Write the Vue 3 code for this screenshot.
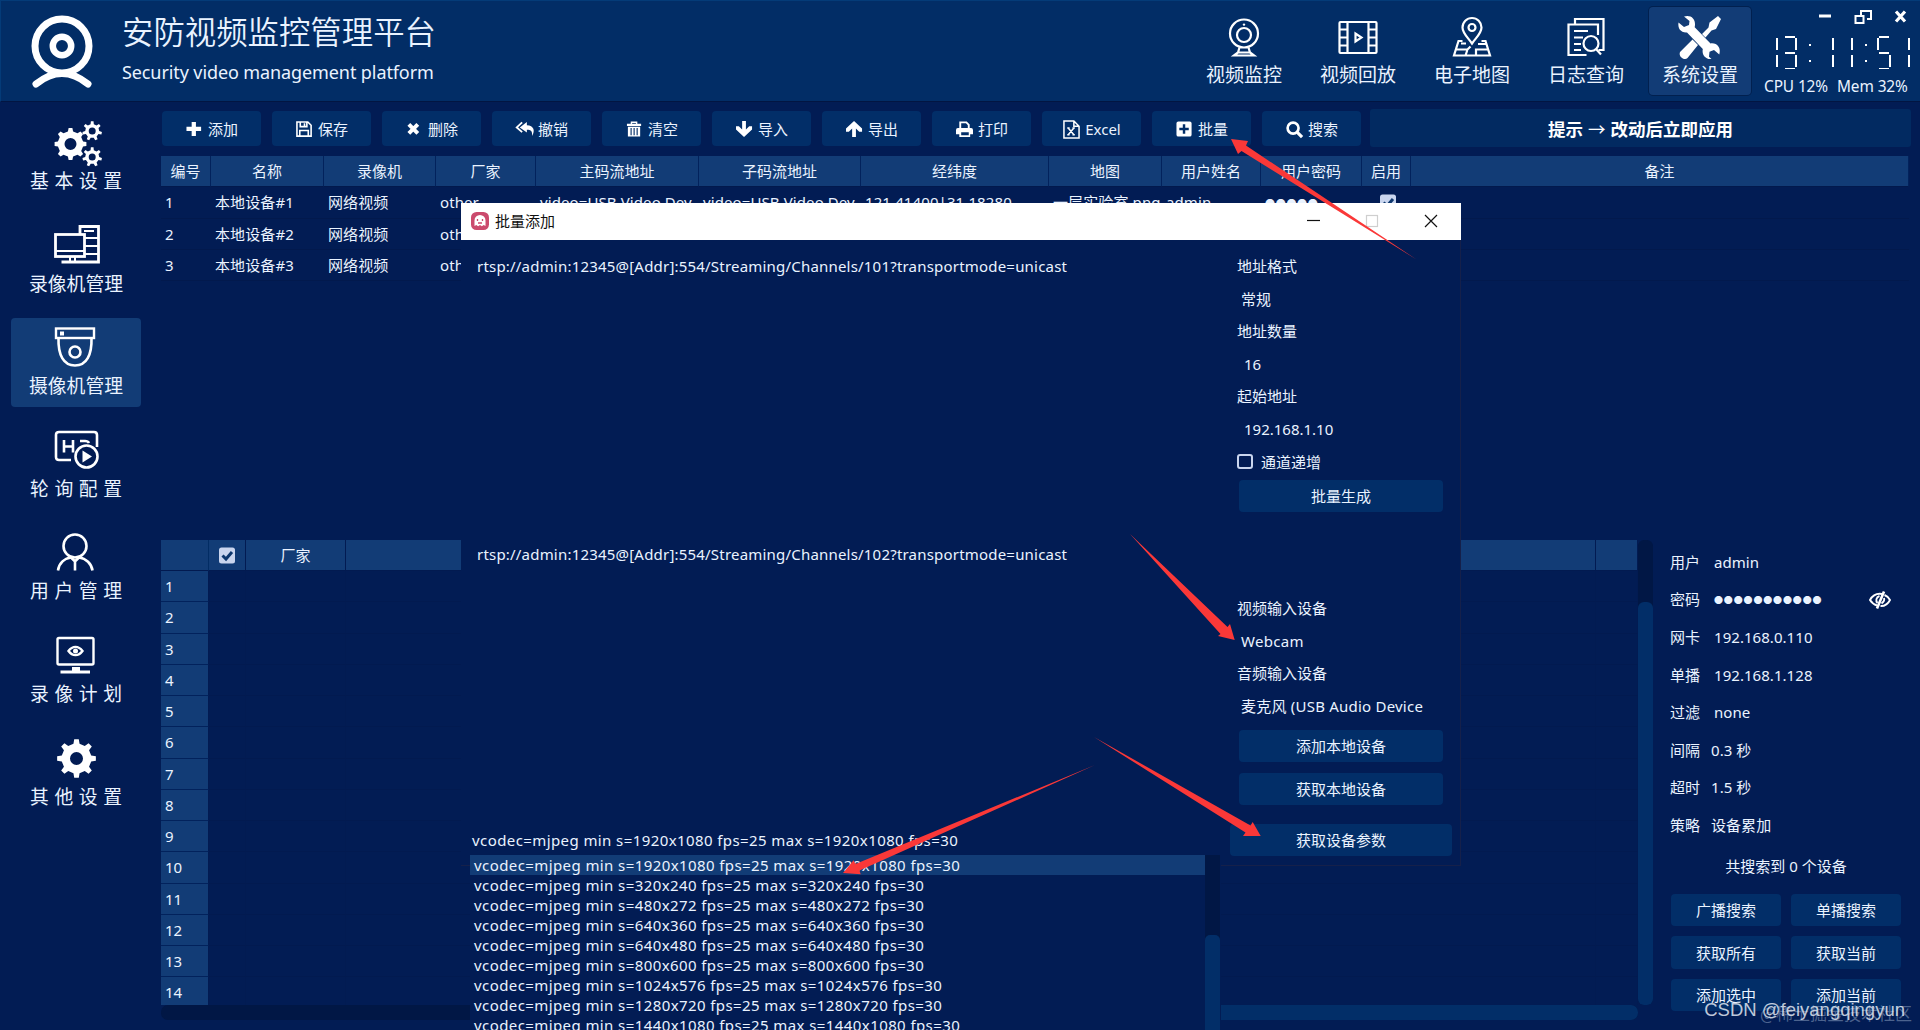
<script setup>
const gear = (cx, cy, ro, ri, hole, n, tw = 0.26) => {
  const pts = []
  for (let i = 0; i < n; i++) {
    const a = (i / n) * Math.PI * 2 - Math.PI / 2
    const step = Math.PI / n
    const p = (r, t) => `${(cx + r * Math.cos(t)).toFixed(2)} ${(cy + r * Math.sin(t)).toFixed(2)}`
    pts.push(p(ri, a - step * (tw + 0.22)), p(ro, a - step * tw), p(ro, a + step * tw), p(ri, a + step * (tw + 0.22)))
  }
  return `<path fill="currentColor" stroke="none" fill-rule="evenodd" d="M${pts.join('L')}Z M${cx - hole} ${cy}a${hole} ${hole} 0 1 0 ${hole * 2} 0a${hole} ${hole} 0 1 0 ${-hole * 2} 0Z"/>`
}

const F = 'fill="currentColor" stroke="none"'
const icons = {
  webcam: '<circle cx="22" cy="18.5" r="14"/><circle cx="22" cy="20" r="7"/><circle cx="22" cy="9.6" r="1.2" fill="currentColor" stroke="none"/><path d="M17.5 32.5l-1.5 5-4 3h20l-4-3-1.500-5M16 37.500h12"/>',
  film: '<rect x="3.500" y="7" width="37" height="31" rx="1"/><path d="M11.500 7v31M32.500 7v31M3.500 14.500h8M3.500 22.500h8M3.500 30.500h8M32.500 14.500h8M32.500 22.500h8M32.500 30.500h8M19.500 18.500v8l6-4z"/>',
  map: '<path d="M22 28.500c-5-7-9.500-10.500-9.500-16a9.500 9.500 0 0 1 19 0c0 5.500-4.500 9-9.500 16z"/><circle cx="22" cy="12.500" r="3.500"/><path d="M12.500 26h-4l-4.500 14.500h36l-4.500-14.500h-4M5.500 34.500h12l3-3M17.500 34.500l-2 6M26 40.500v-6h12M28 29h8M11 28.500h5"/>',
  log: '<path d="M11 9.500v-5.500h28.500v31h-5"/><path d="M34 20v-10.500h-29.500v30.500h18"/><path d="M10 16h14M10 22.500h9M10 29h7M10 35h7"/><circle cx="27" cy="28.500" r="7.500"/><path d="M32 34l5 5.500"/>',
  tools: `<path ${F} d="M7 1.500c6-2 11.500 1.500 11 8.500l-.3 2.200L33.500 28.500c6-1 11 4 8.800 11l-5.300-4.500-4.500 1.800-.5 5 2.500 2.200c-5.500.8-10-4-8.700-10L10 17.500C4 18 .5 13.500 1.500 7.500l5.500 4.500 5-2 .5-4z"/><path ${F} d="M41 1l3 3-5 10-4.500 1.500-6 7-3.500-3.500 6.500-6.500 1-5zM15.500 24.500l5.500 5.500-10.500 13c-2.500 3-9.500-1-7.500-6z"/>`,
  gears: gear(16.500, 22, 16, 12.8, 6, 8, 0.3) + gear(38.200, 9, 9.8, 7, 3.500, 7, 0.3) + gear(38.200, 35, 9.8, 7, 3.500, 7, 0.3),
  pc: '<path stroke-width="2.800" d="M26 9V1.500h18.500v35.500h-37"/><rect x="1.500" y="9.500" width="29" height="22" stroke-width="2.800"/><path stroke-width="2" d="M2 26h28M30 13h14M30 21h14M30 29h14M30 6h10M16 31v5M21 31v5"/>',
  dome: '<rect x="2" y="1.500" width="38" height="9.500" stroke-width="2.400"/><path stroke-width="2.600" d="M4.500 11c-.5 17 5 27.500 16.500 27.500S38 28 37.500 11"/><circle cx="21" cy="25" r="5.500" stroke-width="2.600"/><rect x="6" y="4.500" width="4" height="4" fill="currentColor" stroke="none"/>',
  poll: '<path stroke-width="2.600" d="M17 30H5q-3 0-3-3V5q0-3 3-3h35q3 0 3 3v12"/><path stroke-width="2.600" d="M10 10v12.500M19 10v12.500M10 16.500h9M26 11h5q3 0 4 2"/><circle cx="32.500" cy="26.500" r="11" stroke-width="2.600"/><path fill="currentColor" stroke="none" d="M28.500 20.500v12l9.500-6z"/>',
  user: '<circle cx="21" cy="14" r="11.500" stroke-width="2.600"/><path stroke-width="2.600" d="M4 38.500c1-7 6-12 13-13l4 4 4-4c7 1 12.500 6 13.500 13M21 30v8.500"/>',
  plan: `<rect x="3.500" y="3" width="36" height="26.500" rx="1.500" stroke-width="2.400"/><path ${F} d="M18 32h8v3.500h10v3H6.500v-3H18z"/><path stroke-width="2.400" d="M14.500 16c4-5.500 10-5.500 14 0c-4 5.500-10 5.500-14 0z"/><circle cx="21.500" cy="16" r="2.500" ${F}/>`,
  gear: gear(22.5, 20.5, 19.5, 15, 6.5, 8, 0.3),
  plus: `<path ${F} d="M6 1h4.500v5H16v4.500h-5.500V16H6v-5.500H.5V6H6z"/>`,
  save: '<path stroke-width="1.700" d="M1 1h11.500L16 4.500V16H1zM4.500 1v5h7V1M4 16v-6h9v6M9 2.500v2.500"/>',
  del: '<path stroke-width="4.200" d="M3 3.500l9.500 9.500M12.500 3.500L3 13"/>',
  undo: `<path ${F} d="M12 1L4.500 6.800l7.500 5.500V9.200c4.500 0 6 1.500 5.500 6.800 3.500-6 2-11-5.500-11.500z" transform="translate(-.5 0)"/><path stroke-width="2" d="M6.500 1.500L.8 6.800l5.700 5"/>`,
  trash: `<path ${F} fill-rule="evenodd" d="M1 3h4V.5h7V3h4v2.200H1zM6.500 2v1h4V2zM2 6h13v10.500H2zM4.800 7.500V15H6V7.500zM8 7.500V15h1.200V7.500zM11.200 7.500V15h1.200V7.500z"/>`,
  down: `<path ${F} d="M6.500 0h4v9L14 5.500h3V9l-8.500 8L0 9V5.500h3L6.500 9z"/>`,
  up: `<path ${F} d="M6.500 17h4V8l3.500 3.500h3V8L8.500 0 0 8v3.500h3L6.500 8z"/>`,
  print: `<path stroke-width="2" d="M4.500 9V1.500h6.500l2.500 2.500v5"/><path ${F} fill-rule="evenodd" d="M2 7.500h14q2 0 2 2V14h-3v3H3.500v-3H0V9.500q0-2 2-2zM5.500 12v3h8v-3z"/>`,
  excel: '<path stroke-width="1.600" d="M1 0h10.500L17 5.500V18H1zM11.500 0v5.500H17M5.500 7.500l6 7M11.500 7.500l-6 7M4.500 7.500h2.500M10 7.500h2.500M4.500 14.500h2.500M10 14.500h2.500"/>',
  batch: `<path ${F} fill-rule="evenodd" d="M2.500.5h12q2 0 2 2v12q0 2-2 2h-12q-2 0-2-2v-12q0-2 2-2zM7.200 3.500v3.700H3.500v2.600h3.700v3.700h2.600V9.800h3.700V7.200H9.800V3.500z"/>`,
  search: '<circle cx="7.500" cy="7.500" r="5.800" stroke-width="2.800"/><path stroke-width="3.400" d="M12 12l5 5"/>',
}

const nav = [
  ['webcam', '视频监控'], ['film', '视频回放'], ['map', '电子地图'], ['log', '日志查询'], ['tools', '系统设置'],
]
const side = [
  ['gears', '基本设置'], ['pc', '录像机管理'], ['dome', '摄像机管理'], ['poll', '轮询配置'],
  ['user', '用户管理'], ['plan', '录像计划'], ['gear', '其他设置'],
]
const tools = [
  ['plus', '添加'], ['save', '保存'], ['del', '删除'], ['undo', '撤销'], ['trash', '清空'], ['down', '导入'],
  ['up', '导出'], ['print', '打印'], ['excel', 'Excel'], ['batch', '批量'], ['search', '搜索'],
]
const heads = ['编号', '名称', '录像机', '厂家', '主码流地址', '子码流地址', '经纬度', '地图', '用户姓名', '用户密码', '启用', '备注']
const rows = [1, 2, 3].map((n) => [
  n, `本地设备#${n}`, '网络视频', 'other', 'video=USB Video Dev', 'video=USB Video Dev', '121.41400|31.18280',
  '一层实验室.png', 'admin', '●●●●●', '', '',
].map((c, i) => (n > 1 && i > 3 ? '' : c)))
const form = [
  ['用户', 'admin'], ['密码', '●●●●●●●●●●●'], ['网卡', '192.168.0.110'], ['单播', '192.168.1.128'],
  ['过滤', 'none'], ['间隔', '0.3 秒'], ['超时', '1.5 秒'], ['策略', '设备累加'],
]
const actions = ['广播搜索', '单播搜索', '获取所有', '获取当前', '添加选中', '添加当前']
const sizes = ['1920x1080', '320x240', '480x272', '640x360', '640x480', '800x600', '1024x576', '1280x720', '1440x1080']
const codec = (s) => `vcodec=mjpeg min s=${s} fps=25 max s=${s} fps=30`

// Lit segments of the LCD clock, a..g as on a seven-segment display
const lit = { 1: 'bc', 3: 'abcdg', 5: 'acdfg' }
const time = '13:11:51'
</script>

<template>
  <div class="app">
    <header class="top">
      <svg class="logo" viewBox="0 0 64 74" fill="none" stroke="#fff">
        <circle cx="32" cy="31" r="27" stroke-width="7" />
        <circle cx="32" cy="31" r="9.200" stroke-width="6.500" />
        <path d="M6 69q26-21 52 0" stroke-width="7" stroke-linecap="round" />
      </svg>
      <div class="brand">
        <h1>安防视频监控管理平台</h1>
        <p>Security video management platform</p>
      </div>
      <nav class="nav">
        <div v-for="(n, i) in nav" :key="n[0]" class="nav-item" :class="{ on: i === 4 }">
          <svg viewBox="0 0 44 44" class="ico" v-html="icons[n[0]]" />
          <span>{{ n[1] }}</span>
        </div>
      </nav>
      <div class="status">
        <svg class="wins" viewBox="0 0 90 16" fill="none" stroke="#fff">
          <path d="M0 7h12" stroke-width="3" />
          <path d="M42 8V2h10v8h-4" stroke-width="2" />
          <rect x="36.500" y="7" width="8" height="7" stroke-width="2" />
          <path d="M77 2.500l9 10M86 2.500l-9 10" stroke-width="3.200" />
        </svg>
        <div class="clock" :aria-label="time">
          <span v-for="(c, i) in time" :key="i" class="cell" :class="{ colon: c === ':' }">
            <i v-for="s in lit[c]" :key="s" :class="'seg ' + s" />
          </span>
        </div>
        <div class="usage"><span>CPU 12%</span><span>Mem 32%</span></div>
      </div>
    </header>

    <div class="main">
      <aside class="side">
        <div v-for="(s, i) in side" :key="s[0]" class="side-item" :class="{ on: i === 2, wide: s[1].length === 4 }">
          <svg viewBox="0 0 46 44" class="ico" v-html="icons[s[0]]" />
          <span>{{ s[1] }}</span>
        </div>
      </aside>

      <section class="content">
        <div class="toolbar">
          <button v-for="t in tools" :key="t[0]" class="btn">
            <svg viewBox="0 0 18 18" class="ico" v-html="icons[t[0]]" /><span>{{ t[1] }}</span>
          </button>
          <div class="tip"><span>提示</span><span class="to">→</span><span>改动后立即应用</span></div>
        </div>

        <div class="grid">
          <div class="tr th"><span v-for="h in heads" :key="h">{{ h }}</span></div>
          <div v-for="(r, ri) in rows" :key="r[0]" class="tr">
            <span v-for="(c, i) in r" :key="i" :class="{ dots: i === 9, chk: i === 10 }">
              <svg v-if="i === 10 && ri === 0" class="check" viewBox="0 0 16 16"><rect width="16" height="16" rx="2.500" fill="#c9d5ee" /><path d="M3.500 8l3.500 3.500 6-7" fill="none" stroke="#0d376d" stroke-width="3" /></svg>
              <template v-else>{{ c }}</template>
            </span>
          </div>
        </div>

        <div class="lower">
          <div class="found">
            <div class="fr fh">
              <span /><span><svg class="check" viewBox="0 0 16 16"><rect width="16" height="16" rx="2.500" fill="#c9d5ee" /><path d="M3.500 8l3.500 3.500 6-7" fill="none" stroke="#0d376d" stroke-width="3" /></svg></span><span>厂家</span><span /><span />
            </div>
            <div class="frows">
              <div v-for="n in 14" :key="n" class="fr"><span class="num">{{ n }}</span><span /><span /><span /><span /></div>
            </div>
            <div class="hbar"><i /></div>
          </div>
          <div class="vbar"><i /></div>
          <div class="panel">
            <div v-for="(f, i) in form" :key="f[0]" class="frm" :class="{ near: i > 4 }">
              <label>{{ f[0] }}</label><span :class="{ pw: i === 1 }">{{ f[1] }}</span>
              <svg v-if="i === 1" class="eye" viewBox="0 0 22 18" fill="none" stroke="#fff" stroke-width="1.900">
                <path d="M8 14.500C5 13.500 2.500 11.500 1 9c2.500-4.500 7-6.800 12-6M15.500 4c2.500 1 4.500 3 5.500 5-2 4-5.500 6.200-9.500 6" />
                <path d="M15 .5L8 17.500" stroke-width="2.600" />
                <path d="M8.500 12c-2-2-1.500-6 2-7M15 7q1 3-2.500 5.500" />
              </svg>
            </div>
            <p class="count">共搜索到 0 个设备</p>
            <div class="acts"><button v-for="a in actions" :key="a" class="btn">{{ a }}</button></div>
          </div>
        </div>
      </section>
    </div>

    <div class="dialog">
      <div class="title">
        <svg class="face" viewBox="0 0 18 18"><rect width="18" height="18" rx="5.500" fill="#cb4a6d" /><path d="M3.500 14V8.500a5.500 5.500 0 0 1 11 0V14l-1.800-1-1.800 1.200L9 13l-1.900 1.200L5.300 13z" fill="#fff" /><path d="M6.500 7v2M11.500 7v2M7 11h4" stroke="#cb4a6d" stroke-width="1.300" /></svg>
        <span>批量添加</span>
        <svg class="ctl" viewBox="0 0 132 14" fill="none" stroke="#111" stroke-width="1.200">
          <path d="M0 6.500h13" /><path d="M118 1l12 12M130 1l-12 12" /><rect x="59.500" y="1.500" width="11" height="11" stroke="#cfcfcf" />
        </svg>
      </div>
      <div class="dbody">
        <div class="left">
          <div class="area">rtsp://admin:12345@[Addr]:554/Streaming/Channels/101?transportmode=unicast</div>
          <div class="area">rtsp://admin:12345@[Addr]:554/Streaming/Channels/102?transportmode=unicast</div>
          <div class="combo">{{ codec(sizes[0]) }}</div>
        </div>
        <div class="right">
          <p>地址格式</p>
          <p class="v">常规</p>
          <p>地址数量</p>
          <p class="v n">16</p>
          <p>起始地址</p>
          <p class="v n">192.168.1.10</p>
          <p class="inc"><i class="box" />通道递增</p>
          <button class="btn gen">批量生成</button>
          <p>视频输入设备</p>
          <p class="v dev">Webcam</p>
          <p>音频输入设备</p>
          <p class="v clip"><span>麦克风 (USB Audio Device)</span></p>
          <button class="btn add">添加本地设备</button>
          <button class="btn get">获取本地设备</button>
          <button class="btn param">获取设备参数</button>
        </div>
      </div>
    </div>

    <div class="popup">
      <div class="items"><div v-for="(s, i) in sizes" :key="s" :class="{ sel: i === 0 }">{{ codec(s) }}</div></div>
      <div class="pbar"><i /></div>
    </div>

    <svg class="arrows" viewBox="0 0 1920 1030" fill="#fa3838">
      <polygon points="1231,139 1248,141 1246,145.500 1416.500,259.500 1241.500,151 1238,154" />
      <polygon points="1130,534 1227.500,627 1230,624 1234.700,640 1218,636 1220.500,634" />
      <polygon points="1094,737 1250.500,825.500 1252.700,822 1260.700,836 1243,836 1245.500,832.500" />
      <polygon points="1095,765 855.500,864 853.600,860.300 843,873 860.700,874.300 859.500,870.500" />
    </svg>
    <div class="mark faint">@稀土掘金技术社区</div>
    <div class="mark">CSDN @feiyangqingyun</div>
  </div>
</template>

<style>
body { margin: 0; background: #021c54; }
</style>

<style scoped>
* { box-sizing: border-box; }
.app { position: relative; display: flex; flex-direction: column; width: 1920px; height: 1030px; overflow: hidden; background: #021c54; color: #eaf3ff; font: 400 15px/20px 'Noto Sans', 'Noto Sans CJK SC', sans-serif; }
h1, p { margin: 0; font-weight: inherit; }
.ico { fill: none; stroke: currentColor; stroke-width: 2.2; color: #fff; flex: none; overflow: visible; }
.btn { display: flex; align-items: center; justify-content: center; border: 0; padding: 0; border-radius: 4px; background: #022e68; color: inherit; font: inherit; white-space: nowrap; }

.top { display: flex; height: 102px; flex: none; background: #022d66; border-top: 1px solid #043b78; border-left: 1px solid #043b78; border-bottom: 1px solid #021542; }
.logo { width: 64px; height: 74px; margin: 14px 0 0 29px; }
.brand { margin-left: 28px; width: 361px; white-space: nowrap; }
.brand h1 { margin-top: 10px; font-size: 31.4px; line-height: 42px; font-weight: 350; }
.brand p { margin-top: 6px; font-size: 18px; line-height: 26px; letter-spacing: -0.1px; }
.nav { display: flex; gap: 12px; margin: 6px 0 0 710px; }
.nav-item { width: 102px; height: 88px; display: flex; flex-direction: column; align-items: center; border-radius: 4px; font-size: 19px; }
.nav-item .ico { width: 44px; height: 44px; margin-top: 8px; }
.nav-item span { margin-top: 4px; line-height: 24px; }
.nav-item.on { background: #123c76; box-shadow: 0 0 0 1px #01204f; }
.nav-item.on .ico { margin-left: -3px; }
.status { display: flex; flex-direction: column; margin-left: 13px; width: 150px; }
.wins { width: 90px; height: 16px; margin: 8px 0 0 55px; }
.clock { display: flex; gap: 4.8px; margin: 11px 0 0 0; height: 34px; }
.cell { position: relative; width: 14px; height: 33px; flex: none; }
.seg { position: absolute; background: #fff; }
.seg.a, .seg.g, .seg.d { left: 2px; right: 2px; height: 1.5px; }
.seg.a { top: 0; } .seg.g { top: 16px; } .seg.d { bottom: 0; }
.seg.b, .seg.c, .seg.f { width: 2px; height: 12px; }
.seg.b { top: 2px; right: 0; } .seg.c { bottom: 2px; right: 0; } .seg.f { top: 2px; left: 0; }
.colon::before, .colon::after { content: ''; position: absolute; left: 7px; width: 2px; height: 2px; background: #fff; }
.colon::before { top: 8px; } .colon::after { top: 24px; }
.usage { display: flex; gap: 9px; margin-top: 7px; font-size: 15.4px; letter-spacing: -0.1px; white-space: nowrap; }

.main { display: flex; flex: 1; min-height: 0; }
.side { width: 161px; padding: 11px 0 0 11px; display: flex; flex-direction: column; gap: 13.6px; flex: none; }
.side-item { width: 130px; height: 89px; display: flex; flex-direction: column; align-items: center; border-radius: 4px; font-size: 18.8px; }
.side-item .ico { width: 46px; height: 44px; margin: 9px 0 0 2px; }
.side-item span { margin-top: 3px; line-height: 24px; }
.side-item.wide span { letter-spacing: 5.6px; margin-right: -5.6px; }
.side-item.on { background: #123c76; }

.content { flex: 1; display: flex; flex-direction: column; min-width: 0; }
.toolbar { display: flex; gap: 11px; padding: 9px 0 0 1px; height: 54px; }
.toolbar .btn { width: 99px; height: 35px; gap: 6px; padding: 1px 0 0 1px; }
.toolbar .ico { width: 17px; height: 17px; }
.toolbar .btn span { margin-left: -1px; }
.tip { width: 541px; height: 38px; margin: -2px 0 0 -2px; padding-top: 2px; display: flex; align-items: center; justify-content: center; gap: 5px; background: #022a61; border-radius: 3px; font-size: 17.5px; font-weight: 700; color: #fff; font-family: 'Noto Sans CJK SC', sans-serif; }
.to { font-weight: 400; }
.grid { height: 384px; width: 1748px; }
.tr { display: grid; grid-template-columns: 50px 113px 112px 100px 163px 162px 188px 113px 99px 101px 49px 498px; height: 31.3px; }
.tr > span { overflow: hidden; white-space: nowrap; line-height: 30.5px; padding-left: 4px; letter-spacing: 0.1px; border-bottom: 1px solid #02194d; }
.th > span { padding: 0; text-align: center; letter-spacing: 0; background: #123c76; border-right: 1px solid #02225c; line-height: 30px; }
.tr > .dots { font-size: 10px; letter-spacing: 0.7px; line-height: 35px; }
.tr > .chk { padding: 7px 0 0 18px; }
.check { width: 16px; height: 17px; display: block; }

.lower { display: flex; flex: 1; }
.found { width: 1477px; }
.fr { display: grid; grid-template-columns: 48px 37px 100px 1250px 42px; height: 31.25px; }
.fr > span { border-bottom: 1px solid #021a50; border-right: 1px solid #021b52; }
.fr > .num { background: #123c76; padding-left: 4px; line-height: 30px; border-bottom: 1px solid #02225c; }
.fh { height: 31px; }
.fh > span { background: #123c76; display: flex; align-items: center; justify-content: center; }
.fh > span:first-child { border-right-color: #022c64; }
.frows { height: 434px; overflow: hidden; }
.hbar { height: 15px; background: #011745; border-radius: 7px; }
.hbar i { display: block; margin-left: 340px; height: 15px; background: #022e68; border-radius: 7px; }
.vbar { width: 15px; height: 465px; background: #011745; padding-top: 62px; border-radius: 6px; }
.vbar i { display: block; height: 403px; background: #022e68; border-radius: 6px; }
.panel { width: 240px; margin-left: 17px; padding-top: 3px; }
.frm { display: flex; align-items: center; height: 37.6px; }
.frm label { width: 44px; }
.frm.near label { width: 41px; }
.frm > span { white-space: nowrap; letter-spacing: 0.05px; }
.frm > .pw { font-size: 9px; letter-spacing: 0.85px; width: 155px; padding-top: 2px; }
.eye { width: 22px; height: 18px; margin-top: 2px; }
.count { text-align: center; margin-top: 12px; padding-right: 8px; }
.acts { display: grid; grid-template-columns: 110px 110px; gap: 10px; margin: 18px 0 0 1px; }
.acts .btn { height: 32.5px; }

.dialog { position: absolute; left: 461px; top: 203px; width: 1000px; height: 663px; background: #021c54; border: solid #15204a; border-width: 0 1px 1px 0; }
.title { display: flex; align-items: center; height: 37px; background: #fff; color: #111; padding: 0 19px 2px 10px; width: 1000px; }
.title span { margin-left: 6px; flex: 1; }
.face { width: 18px; height: 18px; }
.ctl { width: 132px; height: 14px; margin-right: 3px; }
.dbody { display: flex; }
.left { width: 769px; padding-top: 8px; }
.area { height: 288px; padding: 8px 0 0 16px; white-space: nowrap; letter-spacing: 0.2px; }
.combo { padding: 6px 0 0 11px; letter-spacing: 0.41px; }
.right { width: 222px; padding: 10px 0 0 7px; }
.right p { height: 32.6px; line-height: 32px; white-space: nowrap; }
.right .v { padding-left: 4px; }
.right .n { padding-left: 7px; letter-spacing: 0; }
.right .dev { letter-spacing: 0.3px; }
.clip span { display: block; width: 182px; overflow: hidden; letter-spacing: 0.22px; }
.right .inc { display: flex; align-items: center; }
.box { width: 16px; height: 15px; border: 2px solid #c9d5ee; border-radius: 3px; margin-right: 8px; }
.right .btn { width: 204px; height: 32px; margin-left: 2px; }
.right .gen { margin: 2px 0 80px 2px; }
.right .add { margin-top: 7px; }
.right .get { margin-top: 11px; }
.right .param { width: 222px; margin: 19px 0 0 -7px; }

.popup { position: absolute; left: 470px; top: 855px; width: 751px; height: 175px; overflow: hidden; display: flex; background: #021c54; }
.items { width: 735px; letter-spacing: 0.41px; }
.items > div { height: 20px; line-height: 20px; padding-left: 4px; white-space: nowrap; }
.items .sel { background: #123c76; }
.pbar { width: 15px; height: 190px; background: #011745; padding-top: 80px; }
.pbar i { display: block; height: 110px; background: #022e68; border-radius: 5px; }
.arrows { position: absolute; left: 0; top: 0; width: 1920px; height: 1030px; pointer-events: none; }
.mark { position: absolute; right: 15px; bottom: 7px; font: 18.500px/26px 'Liberation Sans', sans-serif; color: rgba(225, 232, 242, 0.85); white-space: nowrap; }
.mark.faint { right: 8px; bottom: 4px; font: 17px/26px 'Noto Sans CJK SC', sans-serif; color: rgba(150, 170, 200, 0.5); }
</style>
